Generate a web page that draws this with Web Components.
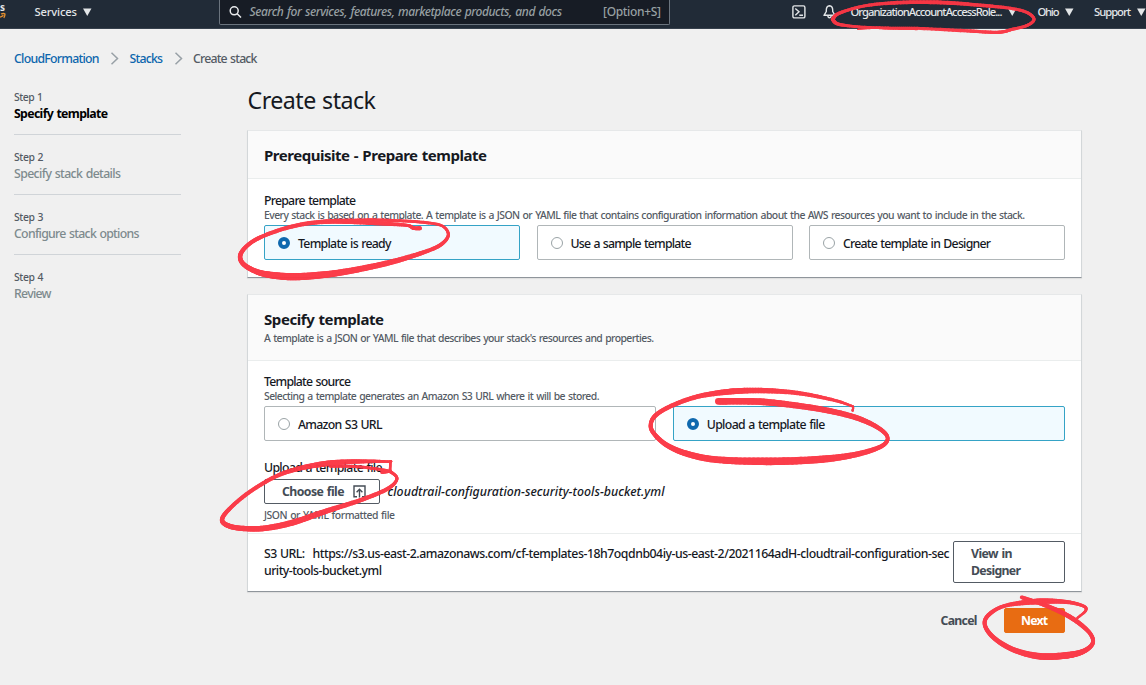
<!DOCTYPE html>
<html lang="en">
<head>
<meta charset="utf-8">
<title>Create stack</title>
<style>
html,body{margin:0;height:100%;overflow:hidden;background:#f0f0f0}
body{font-family:"Noto Sans","Open Sans",sans-serif}
</style>
</head>
<body>
<create-stack-page></create-stack-page>
<script>
const define=(name,html,connected)=>{
  const t=document.createElement('template');t.innerHTML=html;
  customElements.define(name,class extends HTMLElement{
    constructor(){super();this.attachShadow({mode:'open'}).append(t.content.cloneNode(true));}
    connectedCallback(){if(connected)connected.call(this,this.shadowRoot);}
  });
};

/* One line of text whose tracking is adjusted to a given run width. */
define('fit-text',`<style>
:host{display:block;white-space:nowrap;width:max-content;flex:none;font-size:12.3px;line-height:17px;font-weight:500;color:#16191f;word-spacing:.8px}
:host([kind=hint]){font-size:10.4px;line-height:14px;color:#545b64}
:host([kind=head]){font-size:15px;line-height:22px;font-weight:700}
:host([kind=title]){font-size:23.2px;line-height:32px;font-weight:400}
:host([kind=bold]){font-weight:700}
:host([kind=action]){font-weight:700;color:#444c55}
:host([kind=file]){font-style:italic}
</style><slot></slot>`,function(){
  const w=+this.getAttribute('w');
  const n=this.textContent.length;
  const natural=this.getBoundingClientRect().width;
  this.style.letterSpacing=((w-natural)/Math.max(1,n-1))+'px';
  this.style.width=w+'px';
});

define('caret-down',`<style>:host{display:block;flex:none;width:8.5px;height:8px}svg{display:block}</style>
<svg width="8.5" height="8" viewBox="0 0 8.5 8"><path d="M0 0.4h8.5L4.25 8z" fill="#e3e6e8"/></svg>`);

define('top-nav',`<style>
:host{display:flex;height:29px;box-sizing:border-box;background:#212b37;border-bottom:1px solid #36404c;align-items:flex-start;overflow:hidden}
fit-text{color:#e3e6e8;font-size:11.2px;margin-top:3px}
caret-down{margin-top:8px}
.logo{width:6px;height:22px;flex:none}
.logo b{display:block;font-size:10px;line-height:14px;color:#e3e6e8}
.logo svg{display:block;margin-top:-2px}
.search{box-sizing:border-box;width:451px;height:25px;border:1px solid #6b747e;border-top:0;border-radius:0 0 2px 2px;background:#171c25;display:flex;margin-left:127px;flex:none}
.search svg{margin:5px 0 0 9px;flex:none}
.search fit-text{color:#98a0a3;margin-left:8px;font-size:12px}
.search fit-text+fit-text{margin-left:41px}
.icon{flex:none}
</style>
<div class="logo"><b>s</b><svg width="6" height="7" viewBox="0 0 6 7" fill="none" stroke="#e8912d" stroke-width="1.3"><path d="M0 5.2Q2 4.6 3.4 3.2M1 2Q3.6 1 5 2Q5 4 3.8 5.8"/></svg></div>
<fit-text w="42.5" style="margin-left:28.5px">Services</fit-text><caret-down style="margin-left:6px"></caret-down>
<div class="search"><svg width="13" height="13" viewBox="0 0 13 13" fill="none" stroke="#e9ebed" stroke-width="1.5"><circle cx="5.2" cy="5.8" r="4"/><path d="M8.2 8.8L12 12.5"/></svg>
<fit-text w="312.5" kind="file">Search for services, features, marketplace products, and docs</fit-text><fit-text w="58">[Option+S]</fit-text></div>
<svg class="icon" style="margin:5px 0 0 122px" width="14" height="14" viewBox="0 0 14 14" fill="none" stroke="#e3e6e8" stroke-width="1.4"><rect x=".9" y=".9" width="12" height="12" rx="1.5"/><path d="M3.3 3.5L7 6.8L3.3 10.2M7.3 10.2h3.7"/></svg>
<svg class="icon" style="margin:5px 0 0 17px" width="13" height="14" viewBox="0 0 13 14" fill="none" stroke="#e3e6e8" stroke-width="1.4" stroke-linejoin="round"><path d="M6.5.8Q3.3 1.3 3.3 5V6.5L1 10.3H12L9.7 6.5V5Q9.7 1.3 6.5.8ZM4.8 10.5Q5 12.8 6.5 12.8Q8 12.8 8.2 10.5"/></svg>
<fit-text w="152" style="margin-left:15px">OrganizationAccountAccessRole...</fit-text><caret-down style="margin-left:5.5px"></caret-down>
<fit-text w="22" style="margin-left:21px">Ohio</fit-text><caret-down style="margin-left:5.5px"></caret-down>
<fit-text w="37" style="margin-left:20.5px">Support</fit-text><caret-down style="margin-left:6px"></caret-down>`);

define('crumb-trail',`<style>
:host{display:flex;align-items:center;height:18px;padding:20px 0 1px 14px}
.link{color:#0c66ad}.here{color:#545b64}
svg{margin:0 10.5px;flex:none}
</style>
<fit-text class="link" w="85.5">CloudFormation</fit-text>
<svg width="9" height="13" viewBox="0 0 9 13" fill="none" stroke="#98a0a6" stroke-width="1.5"><path d="M1.5.8L7.5 6.5L1.5 12.2"/></svg>
<fit-text class="link" w="33.5">Stacks</fit-text>
<svg width="9" height="13" viewBox="0 0 9 13" fill="none" stroke="#98a0a6" stroke-width="1.5"><path d="M1.5.8L7.5 6.5L1.5 12.2"/></svg>
<fit-text class="here" w="64.5">Create stack</fit-text>`);

define('wizard-step',`<style>
:host{display:block;box-sizing:border-box;height:60px;padding-top:15px;border-bottom:1px solid #d0d4d8}
:host([last]){border:0}
::slotted([kind=hint]){color:#545b64}
::slotted(.off){color:#7d8a8d}
::slotted(.on){color:#000}
::slotted(:last-child){margin-top:1px}
</style><slot></slot>`);

define('side-steps',`<style>:host{display:block;width:167px;margin:0 0 0 14px;flex:none}</style>
<wizard-step><fit-text kind="hint" w="29">Step 1</fit-text><fit-text kind="bold" class="on" w="94">Specify template</fit-text></wizard-step>
<wizard-step><fit-text kind="hint" w="29.5">Step 2</fit-text><fit-text class="off" w="107">Specify stack details</fit-text></wizard-step>
<wizard-step><fit-text kind="hint" w="29.5">Step 3</fit-text><fit-text class="off" w="125.5">Configure stack options</fit-text></wizard-step>
<wizard-step last><fit-text kind="hint" w="29.5">Step 4</fit-text><fit-text class="off" w="37.5">Review</fit-text></wizard-step>`);

define('form-panel',`<style>
:host{display:flex;flex-direction:column;box-sizing:border-box;width:835px;background:#fff;border:1px solid #d3d7d9;border-top-color:#e6e8e9;border-bottom-color:#8f959b;box-shadow:0 1px 1px #0001}
header{background:#fafafa;border-bottom:1px solid #eaeded;padding:0 16px;box-sizing:border-box}
.body{padding:0 16px;flex:1}
</style><header part="header"><slot name="header"></slot></header><div class="body"><slot></slot></div><slot name="footer"></slot>`);

define('radio-tile',`<style>
:host{display:flex;align-items:center;flex:1;box-sizing:border-box;height:35px;border:1px solid #b0b6b8;border-radius:2px;background:#fff;padding-left:13px;gap:8px}
:host([checked]){background:#f1faff;border-color:#35a3c6}
i{box-sizing:border-box;width:12px;height:12px;border-radius:50%;border:1px solid #9aa3a6;background:#fff;flex:none}
:host([checked]) i{border:4px solid #0f68ae}
::slotted(fit-text){margin-top:1px}
</style><i></i><slot></slot>`);

define('push-button',`<style>
:host{display:flex;align-items:center;box-sizing:border-box;height:25px;border:1px solid #545b64;border-radius:2px;background:#fff;padding:0 17px;flex:none}
:host([primary]){background:#e86c12;border-color:#e86c12;padding:0 16px}
</style><slot></slot>`);

/* Marker strokes: "x,y,width" knots, smoothed and drawn with a varying nib. */
define('marker-ink',`<style>
:host{position:absolute;inset:0;pointer-events:none}
svg{display:block;width:1146px;height:685px}
</style><svg viewBox="0 0 1146 685"><g stroke="#fb3745" stroke-linecap="round" opacity=".97"></g></svg>`,function(root){
  const g=root.querySelector('g');
  const [ox,oy]=this.getAttribute('origin').split(',').map(Number);
  const k=this.getAttribute('knots').trim().split(/\s+/).map(s=>{const [x,y,w]=s.split(',').map(Number);return [ox+x/3,oy+y/3,w/3];});
  const cr=(a,b,c,d,t)=>.5*(2*b+(c-a)*t+(2*a-5*b+4*c-d)*t*t+(3*b-a-3*c+d)*t*t*t);
  let last=k[0];
  for(let i=0;i<k.length-1;i++){
    const p=[k[Math.max(0,i-1)],k[i],k[i+1],k[Math.min(k.length-1,i+2)]];
    for(let j=1;j<=12;j++){
      const q=[0,1].map(n=>cr(p[0][n],p[1][n],p[2][n],p[3][n],j/12));
      q.push(p[1][2]+(p[2][2]-p[1][2])*j/12);
      const l=document.createElementNS('http://www.w3.org/2000/svg','line');
      l.setAttribute('x1',last[0]);l.setAttribute('y1',last[1]);
      l.setAttribute('x2',q[0]);l.setAttribute('y2',q[1]);
      l.setAttribute('stroke-width',q[2]);g.append(l);last=q;
    }
  }
});

define('create-stack-page',`<style>
:host{display:block;position:relative;width:1146px;height:685px;overflow:hidden}
.cols{display:flex;margin-top:7px}
main{width:835px;margin-left:66px;padding-top:9px}
main>fit-text{margin-left:.5px}
.tiles{display:flex;gap:16.5px}
.p1{height:148px;margin-top:14px}
.p1::part(header){height:48px;padding-top:13px}
.p2{height:298px;margin-top:16px}
.p2::part(header){height:66px;padding-top:13px}
.row{display:flex;align-items:center}
.foot{display:flex;box-sizing:border-box;border-top:1px solid #eaeded;padding:7px 16px 0;justify-content:space-between;height:58px}
.url{padding-top:4px}
.tall{height:42px;width:112px}
.actions{display:flex;justify-content:flex-end;align-items:center;gap:26.5px;padding:16px 17px 0 0}
</style>
<top-nav></top-nav>
<crumb-trail></crumb-trail>
<div class="cols">
<side-steps></side-steps>
<main>
<fit-text kind="title" w="128.5">Create stack</fit-text>
<form-panel class="p1"><fit-text slot="header" kind="head" w="223">Prerequisite - Prepare template</fit-text>
<fit-text w="92" style="margin-top:13px">Prepare template</fit-text>
<fit-text kind="hint" w="761" style="margin-top:-1px;margin-bottom:3px">Every stack is based on a template. A template is a JSON or YAML file that contains configuration information about the AWS resources you want to include in the stack.</fit-text>
<div class="tiles"><radio-tile checked><fit-text w="93.5">Template is ready</fit-text></radio-tile><radio-tile><fit-text w="121">Use a sample template</fit-text></radio-tile><radio-tile><fit-text w="148">Create template in Designer</fit-text></radio-tile></div>
</form-panel>
<form-panel class="p2"><fit-text slot="header" kind="head" w="120">Specify template</fit-text><fit-text slot="header" kind="hint" w="390" style="margin-top:1px">A template is a JSON or YAML file that describes your stack's resources and properties.</fit-text>
<fit-text w="87" style="margin-top:12px">Template source</fit-text>
<fit-text kind="hint" w="335.5" style="margin-top:-1px;margin-bottom:3px">Selecting a template generates an Amazon S3 URL where it will be stored.</fit-text>
<div class="tiles"><radio-tile><fit-text w="84.5">Amazon S3 URL</fit-text></radio-tile><radio-tile checked><fit-text w="118.5">Upload a template file</fit-text></radio-tile></div>
<fit-text w="118.5" style="margin-top:18px;margin-bottom:3px">Upload a template file</fit-text>
<div class="row"><push-button><fit-text kind="action" w="62.5">Choose file</fit-text><svg style="margin:0 -4px 0 8px" width="13" height="13" viewBox="0 0 13 13" fill="none" stroke="#444c55" stroke-width="1.4"><path d="M4 11.7H1V1h11v10.7H9M6.5 12.5V4.5M3.6 7.2L6.5 4.2L9.4 7.2"/></svg></push-button><fit-text kind="file" w="277" style="margin-left:8px">cloudtrail-configuration-security-tools-bucket.yml</fit-text></div>
<fit-text kind="hint" w="131" style="margin-top:3.5px">JSON or YAML formatted file</fit-text>
<div slot="footer" class="foot"><div class="url"><div class="row"><fit-text w="41">S3 URL:</fit-text><fit-text w="637" style="margin-left:7.5px">https://s3.us-east-2.amazonaws.com/cf-templates-18h7oqdnb04iy-us-east-2/2021164adH-cloudtrail-configuration-sec</fit-text></div><fit-text w="118">urity-tools-bucket.yml</fit-text></div>
<push-button class="tall"><div><fit-text kind="action" w="41.5">View in</fit-text><fit-text kind="action" w="50">Designer</fit-text></div></push-button></div>
</form-panel>
<div class="actions"><fit-text kind="action" w="37">Cancel</fit-text><push-button primary><fit-text kind="bold" w="27" style="color:#fff">Next</fit-text></push-button></div>
</main>
</div>
<marker-ink origin="764,0" knots="206,58,11 225,40,10 300,18,9 400,8,11 520,7,12 640,15,11 740,25,9 790,38,9 810,58,9 790,76,9 745,88,9 700,97,10 600,92,10 460,85,9 380,84,8 280,80,8 222,72,10 206,58,11"></marker-ink>
<marker-ink origin="764,0" knots="281,88,4 330,85,4 375,87,4 460,88,5"></marker-ink>
<marker-ink origin="230,80" knots="570,445,12 550,444,11 530,436,9 450,430,13 350,424,16 260,427,13 180,441,12 100,468,12 55,494,12 31,525,13 40,552,14 80,575,16 130,586,20 200,590,22 300,582,20 400,565,18 500,542,16 600,510,12 640,488,11 655,462,9 635,437,8 580,427,9 500,422,9 420,420,10 340,422,10"></marker-ink>
<marker-ink origin="500,360" knots="655,124,20 780,125,20 900,138,18 1000,155,17 1080,177,16 1140,207,13 1163,235,11 1140,261,13 1060,285,17 950,299,22 800,304,23 650,299,20 560,281,18 500,255,15 463,222,13 452,195,12 468,165,13 520,135,13 600,108,14 700,94,18 800,92,16 900,100,13 1000,120,10 1050,136,7 1059,141,6 1058,152,7"></marker-ink>
<marker-ink origin="210,440" knots="515,97,9 538,94,9 540,90,8 541,66,7 538,65,7 480,64,11 400,66,15 340,72,17 270,85,14 200,108,12 120,155,12 60,205,12 36,240,13 60,259,15 110,266,16 170,264,17 250,247,18 350,213,16 450,181,13 530,148,12 560,120,9 550,101,9 520,90,9 440,80,9 360,78,10"></marker-ink>
<marker-ink origin="840,520" knots="545,232,11 600,250,12 660,275,14 710,304,14 750,340,12 758,370,12 730,394,15 680,406,20 600,409,20 520,389,16 460,352,14 434,312,12 450,281,12 500,256,11 600,244,18 680,246,12 730,258,9 737,272,8 712,294,7"></marker-ink>`);
</script>
</body>
</html>
